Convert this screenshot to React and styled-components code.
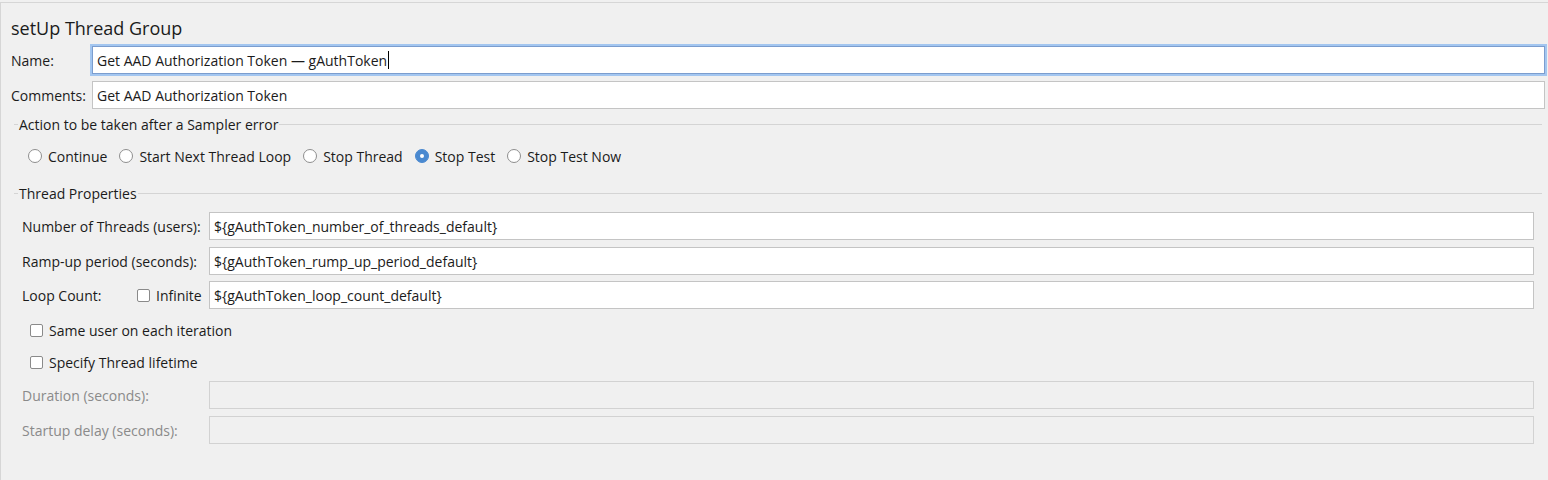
import React from 'react';
import styled, { createGlobalStyle } from 'styled-components';

const GlobalStyle = createGlobalStyle`
  html, body {
    margin: 0;
    padding: 0;
    background: #f0f0f0;
  }
  body {
    font-family: "Open Sans", "Noto Sans", "Liberation Sans", sans-serif;
    font-size: 14px;
    color: #1b1b1b;
  }
`;

const Panel = styled.div`
  margin-top: 2px;
  height: 478px;
  box-sizing: border-box;
  border-top: 1px solid #d6d6d6;
  border-left: 1px solid #d6d6d6;
  display: flex;
  flex-direction: column;
`;

const Title = styled.h1`
  margin: 0;
  padding: 13px 0 0 10px;
  height: 41px;
  box-sizing: border-box;
  font-size: 18px;
  font-weight: 400;
  line-height: 24px;
  color: #1b1b1b;
`;

const FieldRow = styled.div`
  display: grid;
  grid-template-columns: ${({ labelWidth }) => labelWidth}px 1fr;
  align-items: center;
  padding: 0 ${({ right }) => right}px 0 ${({ left }) => left}px;
  margin-top: ${({ top }) => top}px;
`;

const Label = styled.label`
  white-space: nowrap;
  color: ${({ disabled }) => (disabled ? '#8a8a8a' : '#1b1b1b')};
`;

const TextBox = styled.div`
  height: 28px;
  box-sizing: border-box;
  display: flex;
  align-items: center;
  padding-left: 4px;
  background: ${({ disabled }) => (disabled ? '#f0f0f0' : '#ffffff')};
  border: 1px solid ${({ focused, disabled }) => (focused ? '#7b9dce' : disabled ? '#d2d2d2' : '#c4c4c4')};
  box-shadow: ${({ focused }) => (focused ? '0 0 0 2px #a3c6f0' : 'none')};
  white-space: nowrap;
  overflow: hidden;
`;

const Caret = styled.span`
  display: inline-block;
  width: 1px;
  height: 18px;
  background: #000;
  margin-left: 1px;
`;

const Legend = styled.div`
  display: flex;
  align-items: center;
  margin: ${({ top }) => top}px 6px 0 13px;
  height: 20px;
`;

const LegendLine = styled.div`
  height: 1px;
  background: #d4d4d4;
  flex: ${({ grow }) => (grow ? 1 : 'none')};
  width: ${({ grow }) => (grow ? 'auto' : '4px')};
`;

const LegendText = styled.span`
  padding: 0 1px;
  white-space: nowrap;
`;

const RadioGroup = styled.div`
  display: flex;
  align-items: center;
  gap: 12px;
  margin: 11px 0 0 27px;
  height: 22px;
`;

const Option = styled.label`
  display: flex;
  align-items: center;
  gap: 6px;
  white-space: nowrap;
`;

const RadioDot = styled.span`
  width: 14px;
  height: 14px;
  box-sizing: border-box;
  border-radius: 50%;
  background: ${({ checked }) => (checked ? '#4a89d0' : '#ffffff')};
  border: 1px solid ${({ checked }) => (checked ? '#4a89d0' : '#8e8e8e')};
  display: flex;
  align-items: center;
  justify-content: center;
  &::after {
    content: '';
    display: ${({ checked }) => (checked ? 'block' : 'none')};
    width: 4px;
    height: 4px;
    border-radius: 50%;
    background: #ffffff;
  }
`;

const CheckBox = styled.span`
  width: 13px;
  height: 13px;
  box-sizing: border-box;
  border: 1px solid #8a8a8a;
  border-radius: 2px;
  background: #ffffff;
`;

const LoopCell = styled.div`
  display: flex;
  align-items: center;
`;

const InfiniteOption = styled(Option)`
  width: 72px;
  flex: none;
`;

const CheckRow = styled(Option)`
  margin: ${({ top }) => top}px 0 0 29px;
  height: 22px;
`;

const radios = ['Continue', 'Start Next Thread Loop', 'Stop Thread', 'Stop Test', 'Stop Test Now'];

const App = () => (
  <>
    <GlobalStyle />
    <Panel>
      <Title>setUp Thread Group</Title>

      <FieldRow labelWidth={81} left={10} right={3} top={2}>
        <Label>Name:</Label>
        <TextBox focused>
          Get AAD Authorization Token — gAuthToken
          <Caret />
        </TextBox>
      </FieldRow>
      <FieldRow labelWidth={81} left={10} right={3} top={7}>
        <Label>Comments:</Label>
        <TextBox>Get AAD Authorization Token</TextBox>
      </FieldRow>

      <Legend top={5}>
        <LegendLine />
        <LegendText>Action to be taken after a Sampler error</LegendText>
        <LegendLine grow />
      </Legend>
      <RadioGroup>
        {radios.map((r) => (
          <Option key={r}>
            <RadioDot checked={r === 'Stop Test'} />
            {r}
          </Option>
        ))}
      </RadioGroup>

      <Legend top={16}>
        <LegendLine />
        <LegendText>Thread Properties</LegendText>
        <LegendLine grow />
      </Legend>

      <FieldRow labelWidth={187} left={21} right={14} top={9}>
        <Label>Number of Threads (users):</Label>
        <TextBox>{'${gAuthToken_number_of_threads_default}'}</TextBox>
      </FieldRow>
      <FieldRow labelWidth={187} left={21} right={14} top={7}>
        <Label>Ramp-up period (seconds):</Label>
        <TextBox>{'${gAuthToken_rump_up_period_default}'}</TextBox>
      </FieldRow>
      <FieldRow labelWidth={115} left={21} right={14} top={6}>
        <Label>Loop Count:</Label>
        <LoopCell>
          <InfiniteOption>
            <CheckBox />
            Infinite
          </InfiniteOption>
          <TextBox style={{ flex: 1 }}>{'${gAuthToken_loop_count_default}'}</TextBox>
        </LoopCell>
      </FieldRow>

      <CheckRow top={10}>
        <CheckBox />
        Same user on each iteration
      </CheckRow>
      <CheckRow top={10}>
        <CheckBox />
        Specify Thread lifetime
      </CheckRow>

      <FieldRow labelWidth={187} left={21} right={14} top={8}>
        <Label disabled>Duration (seconds):</Label>
        <TextBox disabled />
      </FieldRow>
      <FieldRow labelWidth={187} left={21} right={14} top={7}>
        <Label disabled>Startup delay (seconds):</Label>
        <TextBox disabled />
      </FieldRow>
    </Panel>
  </>
);

export default App;
